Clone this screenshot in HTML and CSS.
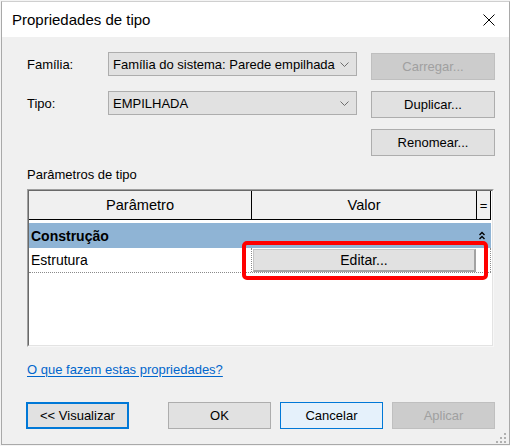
FILE: index.html
```html
<!DOCTYPE html>
<html lang="pt">
<head>
<meta charset="utf-8">
<title>Propriedades de tipo</title>
<link rel="stylesheet" href="styles.css">
</head>
<body>
<div class="window">
  <div class="titlebar">
    <span class="title">Propriedades de tipo</span>
    <svg class="close" width="12" height="12" viewBox="0 0 12 12"><path d="M0.5 0.5L11.5 11.5M11.5 0.5L0.5 11.5" stroke="#000" stroke-width="1" fill="none"/></svg>
  </div>
  <div class="content">
    <div class="form">
      <div class="lbl">Família:</div>
      <div class="combo"><span>Família do sistema: Parede empilhada</span><svg class="chev" width="9" height="5" viewBox="0 0 9 5"><polyline points="0.5,0.5 4.5,4.5 8.5,0.5" fill="none" stroke="#6d6d6d" stroke-width="1"/></svg></div>
      <div class="btn btn-disabled btn-first">Carregar...</div>
      <div class="lbl">Tipo:</div>
      <div class="combo"><span>EMPILHADA</span><svg class="chev" width="9" height="5" viewBox="0 0 9 5"><polyline points="0.5,0.5 4.5,4.5 8.5,0.5" fill="none" stroke="#6d6d6d" stroke-width="1"/></svg></div>
      <div class="btn">Duplicar...</div>
      <div class="btn btn-col3">Renomear...</div>
    </div>
    <div class="section-label">Parâmetros de tipo</div>
    <div class="table-wrap">
      <div class="table-outer">
        <div class="table-inner">
          <div class="thead">
            <div class="th th-param">Parâmetro</div>
            <div class="th th-value">Valor</div>
            <div class="th th-eq">=</div>
          </div>
          <div class="group-row">
            <span class="group-name">Construção</span>
            <svg class="collapse" width="6" height="9" viewBox="0 0 6 9"><polyline points="0.5,4 3,1.5 5.5,4" fill="none" stroke="#000" stroke-width="1.4"/><polyline points="0.5,8 3,5.5 5.5,8" fill="none" stroke="#000" stroke-width="1.4"/></svg>
          </div>
          <div class="prow">
            <div class="pname">Estrutura</div>
            <div class="pvalue"><div class="edit-btn">Editar...</div></div>
          </div>
        </div>
      </div>
      <div class="highlight"></div>
    </div>
    <a class="help" href="#">O que fazem estas propriedades?</a>
    <div class="actions">
      <div class="btn abtn btn-focus">&lt;&lt; Visualizar</div>
      <div class="btn abtn">OK</div>
      <div class="btn abtn btn-hover">Cancelar</div>
      <div class="btn abtn btn-disabled">Aplicar</div>
    </div>
  </div>
  <svg class="grip" width="10" height="10" viewBox="0 0 10 10">
    <rect x="8" y="0" width="2" height="2" fill="#b0b0b0"/>
    <rect x="4" y="4" width="2" height="2" fill="#b0b0b0"/>
    <rect x="8" y="4" width="2" height="2" fill="#b0b0b0"/>
    <rect x="0" y="8" width="2" height="2" fill="#b0b0b0"/>
    <rect x="4" y="8" width="2" height="2" fill="#b0b0b0"/>
    <rect x="8" y="8" width="2" height="2" fill="#b0b0b0"/>
  </svg>
</div>
</body>
</html>
```

FILE: styles.css
```css
html, body {
  margin: 0;
  padding: 0;
  background: #f4f4f4;
}

body {
  font-family: "Liberation Sans", Arial, sans-serif;
  font-size: 13px;
  line-height: 15px;
  color: #000;
}

.window {
  position: relative;
  box-sizing: border-box;
  margin: 1px 0 0 1px;
  width: 509px;
  height: 444px;
  border: 1px solid #a9a9a9;
  border-top-color: #cfcfcf;
  background: #f0f0f0;
  display: flex;
  flex-direction: column;
}

.titlebar {
  height: 35px;
  background: #fff;
  display: flex;
  align-items: center;
  padding-left: 10px;
  flex-shrink: 0;
}

.title {
  font-size: 15px;
  line-height: 18px;
}

.close {
  margin-left: auto;
  margin-right: 14px;
}

.content {
  padding: 15px 13px 0 24px;
  display: flex;
  flex-direction: column;
  align-items: flex-start;
}

.form {
  display: grid;
  grid-template-columns: 68px 249px 124px;
  grid-template-rows: 28px 27px 27px;
  column-gap: 14px;
  row-gap: 11px;
}

.lbl {
  height: 24px;
  display: flex;
  align-items: center;
  padding-left: 1px;
}

.combo {
  box-sizing: border-box;
  height: 24px;
  background: #e1e1e1;
  border: 1px solid #adadad;
  display: flex;
  align-items: center;
  justify-content: space-between;
  padding: 0 7px 0 4px;
  white-space: nowrap;
}

.chev {
  flex-shrink: 0;
}

.btn {
  box-sizing: border-box;
  height: 27px;
  background: #e1e1e1;
  border: 1px solid #adadad;
  display: flex;
  align-items: center;
  justify-content: center;
  white-space: nowrap;
}

.btn-first {
  margin-top: 1px;
}

.btn-col3 {
  grid-column: 3;
}

.btn-disabled {
  background: #cccccc;
  border-color: #bfbfbf;
  color: #a0a0a0;
}

.section-label {
  margin-top: 11px;
  margin-bottom: 7px;
  padding-left: 1px;
}

.table-wrap {
  position: relative;
  margin-left: 1px;
}

.table-outer {
  box-sizing: border-box;
  width: 467px;
  height: 158px;
  border: 1px solid;
  border-color: #a0a0a0 #f7f7f7 #f7f7f7 #a0a0a0;
}

.table-inner {
  box-sizing: border-box;
  height: 100%;
  border: 1px solid;
  border-color: #696969 #e3e3e3 #e3e3e3 #696969;
  background: #fff;
  font-size: 14px;
  line-height: 16px;
}

.thead {
  display: flex;
  width: 462px;
  height: 29px;
  box-sizing: border-box;
  background: #f0f0f0;
  border-bottom: 1px solid #000;
  font-size: 14.6px;
  line-height: 17px;
}

.th {
  box-sizing: border-box;
  border-right: 1px solid #000;
  display: flex;
  align-items: center;
  justify-content: center;
}

.th-param {
  width: 223px;
}

.th-value {
  width: 225px;
}

.th-eq {
  width: 14px;
  font-size: 13px;
}

.group-row {
  margin-top: 3px;
  width: 462px;
  height: 25px;
  box-sizing: border-box;
  background: #8fb4d5;
  display: flex;
  align-items: center;
  justify-content: space-between;
  padding: 0 6px 0 2px;
}

.group-name {
  font-weight: bold;
}

.prow {
  display: flex;
  width: 462px;
  height: 25px;
  box-sizing: border-box;
  border-bottom: 1px dotted #8a8a8a;
}

.pname {
  box-sizing: border-box;
  width: 223px;
  padding-left: 2px;
  border-right: 1px dotted #8a8a8a;
  display: flex;
  align-items: center;
}

.pvalue {
  box-sizing: border-box;
  width: 239px;
  border-right: 1px dotted #8a8a8a;
  padding: 1px 0 0 1px;
}

.edit-btn {
  box-sizing: border-box;
  width: 223px;
  height: 23px;
  background: #e1e1e1;
  border-top: 1px solid #c6c6c6;
  border-left: 1px solid #c6c6c6;
  border-right: 2px solid #a3a3a3;
  border-bottom: 2px solid #a3a3a3;
  display: flex;
  align-items: center;
  justify-content: center;
}

.highlight {
  position: absolute;
  left: 215px;
  top: 52px;
  width: 246px;
  height: 39px;
  box-sizing: border-box;
  border: 4px solid #ff0000;
  border-radius: 5px;
}

.help {
  margin-top: 15px;
  margin-left: 1px;
  color: #0066cc;
  text-decoration: underline;
  text-underline-offset: 2px;
}

.actions {
  margin-top: 25px;
  width: 469px;
  display: flex;
  gap: 9px;
}

.abtn {
  width: 103px;
}

.btn-focus {
  border: 2px solid #0078d7;
  margin-right: auto;
}

.btn-hover {
  background: #e5f1fb;
  border-color: #0078d7;
}

.grip {
  position: absolute;
  right: 3px;
  bottom: 1px;
}
```
